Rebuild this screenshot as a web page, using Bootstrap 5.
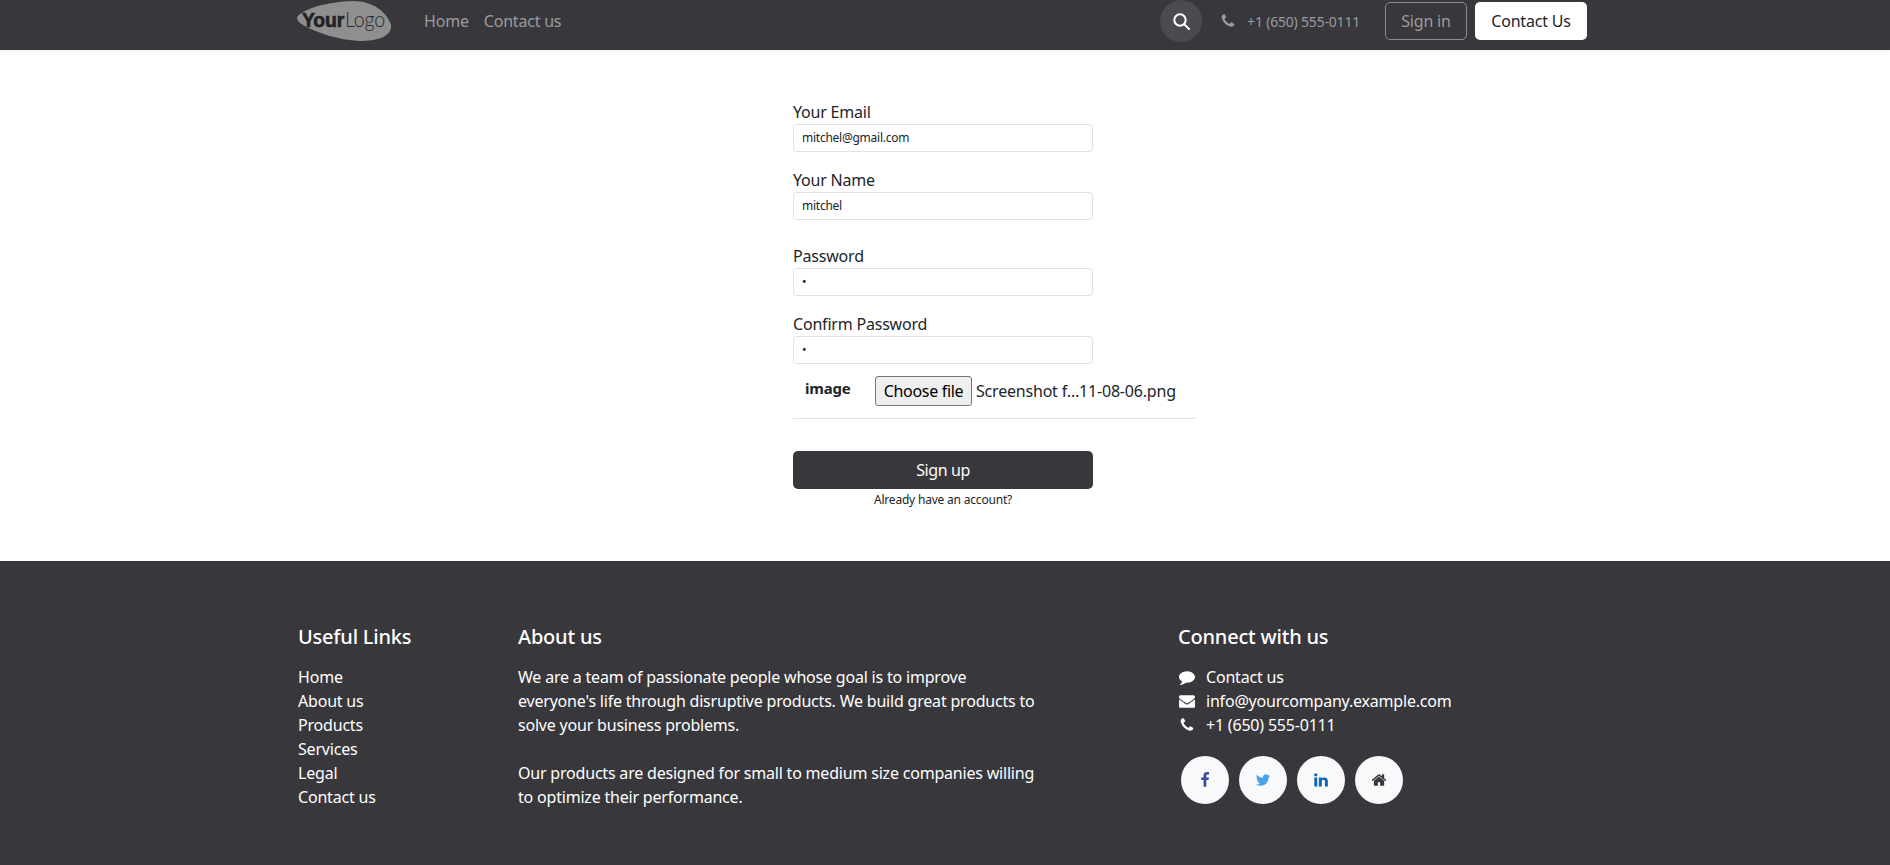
<!DOCTYPE html>
<html lang="en">

<head>
    <meta charset="UTF-8">
    <meta name="viewport" content="width=device-width, initial-scale=1.0">
    <title>Sign up</title>
    <link href="https://cdn.jsdelivr.net/npm/bootstrap@5.3.3/dist/css/bootstrap.min.css" rel="stylesheet">
    <script src="https://cdn.jsdelivr.net/npm/bootstrap@5.3.3/dist/js/bootstrap.bundle.min.js"></script>
    <style>
        body {
            font-family: "Noto Sans", "Open Sans", sans-serif;
            font-size: 16px;
            color: #212529;
            letter-spacing: -0.2px;
        }

        .site-wrap {
            width: 1320px;
            margin: 0 auto;
            padding: 0 12px;
        }

        .top-bar {
            height: 50px;
            padding-bottom: 8px;
            background-color: #38373c;
            box-shadow: 0 1px 2px rgba(0, 0, 0, .08);
        }

        .top-bar .site-wrap {
            height: 42px;
            padding-right: 18px;
        }

        .brand-logo {
            width: 94px;
            height: 42px;
            display: block;
        }

        .top-link {
            color: #9b9b9e;
            text-decoration: none;
        }

        .top-nav {
            margin-left: 33px;
            gap: 15px;
        }

        .search-round {
            width: 42px;
            height: 42px;
            border-radius: 50%;
            background-color: #4b4a4f;
            border: 0;
            padding: 0;
        }

        .top-phone {
            margin-left: 18px;
            margin-right: 25px;
            color: #9b9b9e;
            font-size: 14px;
            gap: 11px;
        }

        .btn-signin {
            height: 38px;
            width: 82px;
            border: 1px solid #8c8c8f;
            color: #9b9b9e;
            border-radius: 5px;
            padding: 0;
            line-height: 36px;
            margin-right: 8px;
        }

        .btn-contact {
            height: 38px;
            width: 112px;
            background-color: #fff;
            color: #212529;
            border-radius: 5px;
            padding: 0;
            line-height: 38px;
            border: 0;
        }

        .signup-box {
            width: 300px;
            margin: 0 auto 0 793px;
            padding-top: 50px;
            height: 511px;
        }

        .field-wrap {
            margin-bottom: 16px;
        }

        .field-wrap.extra-gap {
            margin-top: 24px;
        }

        .field-wrap label {
            display: block;
            line-height: 24px;
        }

        .field-input {
            height: 28px;
            min-height: 28px;
            padding: 0 8px 1px;
            font-size: 12px;
            border-radius: 4px;
            border-color: #dee2e6;
            letter-spacing: -0.25px;
        }

        .file-row {
            width: 402px;
            height: 30px;
            margin-top: -4px;
            white-space: nowrap;
        }

        .file-label {
            font-weight: 700;
            width: 82px;
            padding-left: 12px;
            font-size: 15px;
            margin-top: -6px;
        }

        .file-btn {
            height: 30px;
            width: 97px;
            padding: 0;
            margin-right: 4px;
            background-color: #efefef;
            border: 1px solid #767676;
            border-radius: 3px;
            color: #000;
            letter-spacing: -0.3px;
        }

        .form-rule {
            width: 402px;
            margin: 12px 0 32px;
            opacity: 1;
            border-color: #dee2e6;
        }

        .btn-signup {
            height: 38px;
            background-color: #38373c;
            color: #fff;
            border-radius: 5px;
            padding: 0;
            letter-spacing: -0.4px;
        }

        .already-link {
            font-size: 12px;
            color: #212529;
            text-decoration: none;
            margin-top: 2px;
            line-height: 18px;
        }

        .site-footer {
            background-color: #38373c;
            color: #fff;
            height: 304px;
            padding-top: 64px;
        }

        .site-footer .site-wrap {
            padding-left: 13px;
            padding-right: 11px;
        }

        .site-footer h5 {
            font-size: 20px;
            line-height: 24px;
            font-weight: 500;
            margin-bottom: 16px;
        }

        .site-footer a {
            color: #fff;
            text-decoration: none;
        }

        .site-footer p {
            line-height: 24px;
            margin-bottom: 24px;
        }

        .foot-list li {
            line-height: 24px;
        }

        .contact-icon {
            width: 16px;
            height: 16px;
            margin: 0 11px 0 1px;
            fill: #fff;
            vertical-align: -2px;
        }

        .social-row {
            gap: 10px;
            margin: 19px 0 0 3px;
        }

        .social-dot {
            width: 48px;
            height: 48px;
            border-radius: 50%;
            background-color: #f8f9fa;
        }

        .social-dot svg {
            width: 16px;
            height: 16px;
        }
    </style>
</head>

<body>
    <nav class="top-bar">
        <div class="site-wrap d-flex align-items-center">
            <svg class="brand-logo" viewBox="0 0 94 42">
                <path fill="#8f8f8f" d="M0 17C8 8 30 2 56 1 76 1 90 12 94 25 95 36 82 41 62 41 42 40 20 33 6 25 2 23 0 20 0 17z" />
                <text x="5" y="27" font-family="'Liberation Sans', sans-serif" font-size="21" font-weight="700" fill="#232226" stroke="#232226" stroke-width=".7" textLength="42" lengthAdjust="spacingAndGlyphs">Your</text>
                <text x="48" y="27" font-family="'Lato', sans-serif" font-size="22" font-weight="300" fill="#2b2a2e" textLength="40" lengthAdjust="spacingAndGlyphs">Logo</text>
            </svg>
            <div class="top-nav d-flex">
                <a class="top-link" href="#">Home</a>
                <a class="top-link" href="#">Contact us</a>
            </div>
            <div class="ms-auto d-flex align-items-center">
                <button class="search-round d-flex align-items-center justify-content-center" type="button" aria-label="Search">
                    <svg width="20" height="20" viewBox="0 0 20 20" fill="none" stroke="#fff" stroke-width="2" stroke-linecap="round"><circle cx="9" cy="9" r="5.7" /><path d="M13.3 13.3 18 18" /></svg>
                </button>
                <div class="top-phone d-flex align-items-center">
                    <svg width="16" height="16" viewBox="0 0 1792 1792" fill="#9b9b9e"><path d="M1600 1240q0 27-10 70.5t-21 68.5q-21 50-122 106-94 51-186 51-27 0-53-3.5t-57.5-12.5-47-14.5-55.5-20.5-49-18q-98-35-175-83-127-79-264-216t-216-264q-48-77-83-175-3-9-18-49t-20.5-55.5-14.5-47-12.5-57.5-3.5-53q0-92 51-186 56-101 106-122 25-11 68.5-21t70.5-10q14 0 21 3 18 6 53 76 11 19 30 54t35 63.5 31 53.5q3 4 17.5 25t21.5 35.5 7 28.5q0 20-28.5 50t-62 55-62 53-28.5 46q0 9 5 22.5t8.5 20.5 14 24 11.5 19q76 137 174 235t235 174q2 1 19 11.5t24 14 20.5 8.5 22.5 5q18 0 46-28.5t53-62 55-62 50-28.5q14 0 28.5 7t35.5 21.5 25 17.5q25 15 53.5 31t63.5 35 54 30q70 35 76 53 3 7 3 21z" /></svg>
                    <span>+1 (650) 555-0111</span>
                </div>
                <a class="btn btn-signin" href="#">Sign in</a>
                <a class="btn btn-contact" href="#">Contact Us</a>
            </div>
        </div>
    </nav>

    <form class="signup-box">
        <div class="field-wrap">
            <label for="email">Your Email</label>
            <input id="email" class="form-control field-input" type="text" value="mitchel@gmail.com">
        </div>
        <div class="field-wrap">
            <label for="name">Your Name</label>
            <input id="name" class="form-control field-input" type="text" value="mitchel">
        </div>
        <div class="field-wrap extra-gap">
            <label for="pass">Password</label>
            <input id="pass" class="form-control field-input" type="password" value="1">
        </div>
        <div class="field-wrap">
            <label for="pass2">Confirm Password</label>
            <input id="pass2" class="form-control field-input" type="password" value="1">
        </div>
        <div class="file-row d-flex align-items-center">
            <span class="file-label">image</span>
            <button class="file-btn" type="button">Choose file</button>
            <span>Screenshot f…11-08-06.png</span>
        </div>
        <hr class="form-rule">
        <div class="d-flex flex-column align-items-center">
            <button class="btn btn-signup w-100" type="button">Sign up</button>
            <a class="already-link" href="#">Already have an account?</a>
        </div>
    </form>

    <footer class="site-footer">
        <div class="site-wrap">
            <div class="row">
                <div class="col-2">
                    <h5>Useful Links</h5>
                    <ul class="foot-list list-unstyled mb-0">
                        <li><a href="#">Home</a></li>
                        <li><a href="#">About us</a></li>
                        <li><a href="#">Products</a></li>
                        <li><a href="#">Services</a></li>
                        <li><a href="#">Legal</a></li>
                        <li><a href="#">Contact us</a></li>
                    </ul>
                </div>
                <div class="col-5">
                    <h5>About us</h5>
                    <p>We are a team of passionate people whose goal is to improve everyone's life through disruptive products. We build great products to solve your business problems.</p>
                    <p>Our products are designed for small to medium size companies willing to optimize their performance.</p>
                </div>
                <div class="col-4 offset-1">
                    <h5>Connect with us</h5>
                    <ul class="foot-list list-unstyled mb-0">
                        <li><svg class="contact-icon" viewBox="0 0 1792 1792"><path d="M1792 896q0 174-120 321.5t-326 233-450 85.5q-70 0-145-8-198 175-460 242-49 14-114 22-17 2-30.5-9t-17.5-29v-1q-3-4-.5-12t2-10 4.5-9.5l6-9 7-8.5 8-9q7-8 31-34.5t34.5-38 31-39.5 32.5-51 27-59 26-76q-157-89-247.5-220t-90.5-281q0-130 71-248.5t191-204.5 286-136.5 348-50.5q244 0 450 85.5t326 233 120 321.5z" /></svg><a href="#">Contact us</a></li>
                        <li><svg class="contact-icon" viewBox="0 0 1792 1792"><path d="M1792 710v794q0 66-47 113t-113 47h-1472q-66 0-113-47t-47-113v-794q44 49 101 87 362 246 497 345 57 42 92.5 65.5t94.5 48 110 24.5h2q51 0 110-24.5t94.5-48 92.5-65.5q170-123 498-345 57-39 100-87zm0-294q0 79-49 151t-122 123q-376 261-468 325-10 7-42.5 30.5t-54 38-52 32.5-57.5 27-50 9h-2q-23 0-50-9t-57.5-27-52-32.5-54-38-42.5-30.5q-91-64-262-182.5t-205-142.5q-62-42-117-115.5t-55-136.5q0-78 41.5-130t118.5-52h1472q65 0 112.5 47t47.5 113z" /></svg><a href="#">info@yourcompany.example.com</a></li>
                        <li><svg class="contact-icon" viewBox="0 0 1792 1792"><path d="M1600 1240q0 27-10 70.5t-21 68.5q-21 50-122 106-94 51-186 51-27 0-53-3.5t-57.5-12.5-47-14.5-55.5-20.5-49-18q-98-35-175-83-127-79-264-216t-216-264q-48-77-83-175-3-9-18-49t-20.5-55.5-14.5-47-12.5-57.5-3.5-53q0-92 51-186 56-101 106-122 25-11 68.5-21t70.5-10q14 0 21 3 18 6 53 76 11 19 30 54t35 63.5 31 53.5q3 4 17.5 25t21.5 35.5 7 28.5q0 20-28.5 50t-62 55-62 53-28.5 46q0 9 5 22.5t8.5 20.5 14 24 11.5 19q76 137 174 235t235 174q2 1 19 11.5t24 14 20.5 8.5 22.5 5q18 0 46-28.5t53-62 55-62 50-28.5q14 0 28.5 7t35.5 21.5 25 17.5q25 15 53.5 31t63.5 35 54 30q70 35 76 53 3 7 3 21z" /></svg><span>+1 (650) 555-0111</span></li>
                    </ul>
                    <div class="social-row d-flex">
                        <a class="social-dot d-flex align-items-center justify-content-center" href="#" aria-label="Facebook"><svg viewBox="0 0 1792 1792" fill="#3b4a9c"><path d="M1343 12v264h-157q-86 0-116 36t-30 108v189h293l-39 296h-254v759h-306v-759h-255v-296h255v-218q0-186 104-288.5t277-102.5q147 0 228 12z" /></svg></a>
                        <a class="social-dot d-flex align-items-center justify-content-center" href="#" aria-label="Twitter"><svg viewBox="0 0 1792 1792" fill="#45a4ec"><path d="M1684 408q-67 98-162 167 1 14 1 42 0 130-38 259.5t-115.5 248.5-184.5 210.5-258 146-323 54.5q-271 0-496-145 35 4 78 4 225 0 401-138-105-2-188-64.5t-114-159.5q33 5 61 5 43 0 85-11-112-23-185.5-111.5t-73.5-205.5v-4q68 38 146 41-66-44-105-115t-39-154q0-88 44-163 121 149 294.5 238.5t371.5 99.5q-8-38-8-74 0-134 94.5-228.5t228.5-94.5q140 0 236 102 109-21 205-78-37 115-142 178 92-10 184-50z" /></svg></a>
                        <a class="social-dot d-flex align-items-center justify-content-center" href="#" aria-label="LinkedIn"><svg viewBox="0 0 1792 1792" fill="#0a66b7"><path d="M477 625v991h-330v-991h330zm21-306q1 73-50.5 122t-135.5 49h-2q-82 0-132-49t-50-122q0-74 51.5-122.5t134.5-48.5 133 48.5 51 122.5zm1166 729v568h-329v-530q0-105-40.5-164.5t-126.5-59.5q-63 0-105.5 34.5t-63.5 85.5q-11 30-11 81v553h-329q2-399 2-647t-1-296l-1-48h329v144h-2q20-32 41-56t56.5-52 87-43.5 114.5-15.5q171 0 275 113.5t104 332.5z" /></svg></a>
                        <a class="social-dot d-flex align-items-center justify-content-center" href="#" aria-label="Home"><svg viewBox="0 0 1792 1792" fill="#38373c"><path d="M1472 992v480q0 26-19 45t-45 19h-384v-384h-256v384h-384q-26 0-45-19t-19-45v-480q0-1 .5-3t.5-3l575-474 575 474q1 2 1 6zm223-69l-62 74q-8 9-21 11h-3q-13 0-21-7l-692-577-692 577q-12 8-24 7-13-2-21-11l-62-74q-8-10-7-23.5t11-21.5l719-599q32-26 76-26t76 26l244 204v-195q0-14 9-23t23-9h192q14 0 23 9t9 23v408l219 182q10 8 11 21.5t-7 23.5z" /></svg></a>
                    </div>
                </div>
            </div>
        </div>
    </footer>
</body>

</html>
